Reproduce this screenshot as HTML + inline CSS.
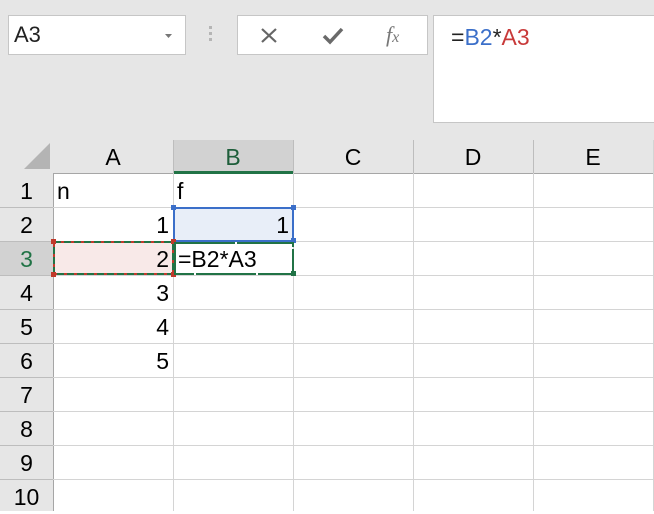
<!DOCTYPE html>
<html><head><style>
body{margin:0;width:654px;height:511px;overflow:hidden;background:#fff;font-family:"Liberation Sans",sans-serif;position:relative}
.a{position:absolute}
.t{position:absolute;font-size:23px;color:#000;line-height:34px}
</style></head><body>
<div class="a" style="left:0;top:0;width:654px;height:173px;background:#e6e6e6"></div>
<!-- name box -->
<div class="a" style="left:8px;top:15px;width:176px;height:38px;background:#fff;border:1px solid #c6c6c6"></div>
<div class="t" style="left:14px;top:18px;font-size:22px;color:#222">A3</div>
<svg class="a" style="left:165px;top:34px" width="8" height="5"><path d="M0 0H7L3.5 4Z" fill="#777"/></svg>
<div class="a" style="left:209px;top:26px;width:3px;height:3px;background:#b5b5b5;box-shadow:0 6px 0 #b5b5b5,0 12px 0 #b5b5b5"></div>
<!-- buttons -->
<div class="a" style="left:237px;top:15px;width:189px;height:38px;background:#fff;border:1px solid #c6c6c6"></div>
<svg class="a" style="left:260px;top:27px" width="18" height="17"><path d="M2 2L16 15M16 2L2 15" stroke="#666" stroke-width="2.2"/></svg>
<svg class="a" style="left:321px;top:26px" width="24" height="20"><path d="M3 10L9 16L21 3" stroke="#6a6a6a" stroke-width="3.5" fill="none"/></svg>
<div class="a" style="left:386px;top:22px;font-family:'Liberation Serif',serif;font-style:italic;font-size:22px;color:#777">f<span style="font-size:16px">x</span></div>
<!-- formula -->
<div class="a" style="left:433px;top:15px;width:225px;height:106px;background:#fff;border:1px solid #c6c6c6"></div>
<div class="t" style="left:451px;top:20px;font-size:23px;line-height:34px;color:#222">=<span style="color:#3b6fc9">B2</span>*<span style="color:#c83a3a">A3</span></div>
<!-- headers -->
<div class="a" style="left:0;top:140px;width:654px;height:33px;background:#e6e6e6;border-bottom:1px solid #a6a6a6"></div>
<div class="a" style="left:173px;top:140px;width:120px;height:31px;background:#d2d2d2;border-bottom:3px solid #217346"></div>
<svg class="a" style="left:20px;top:142px" width="32" height="30"><path d="M4 27L30 1V27Z" fill="#b4b4b4"/></svg>
<div class="a" style="left:0;top:173px;width:53px;height:338px;background:#e6e6e6;border-right:1px solid #a6a6a6"></div>
<div class="a" style="left:0;top:242px;width:53px;height:33px;background:#d2d2d2"></div>
<!-- grid lines -->
<svg class="a" style="left:0;top:140px" width="654" height="371">
<g stroke="#d4d4d4" stroke-width="1">
<path d="M173.5 0V371M293.5 0V371M413.5 0V371M533.5 0V371M653.5 0V371"/>
<path d="M53 67.5H654M53 101.5H654M53 135.5H654M53 169.5H654M53 203.5H654M53 237.5H654M53 271.5H654M53 305.5H654M53 339.5H654"/>
</g>
<g stroke="#bdbdbd"><path d="M0 67.5H53M0 101.5H53M0 135.5H53M0 169.5H53M0 203.5H53M0 237.5H53M0 271.5H53M0 305.5H53M0 339.5H53"/>
<path d="M173.5 0V33M293.5 0V33M413.5 0V33M533.5 0V33"/></g>
</svg>
<!-- header labels -->
<div class="t" style="left:53px;top:140px;width:120px;text-align:center">A</div>
<div class="t" style="left:173px;top:140px;width:120px;text-align:center;color:#1e5e3a">B</div>
<div class="t" style="left:293px;top:140px;width:120px;text-align:center">C</div>
<div class="t" style="left:413px;top:140px;width:120px;text-align:center">D</div>
<div class="t" style="left:533px;top:140px;width:120px;text-align:center">E</div>
<div class="t" style="left:0;top:174px;width:53px;text-align:center">1</div>
<div class="t" style="left:0;top:208px;width:53px;text-align:center">2</div>
<div class="t" style="left:0;top:242px;width:53px;text-align:center;color:#217346">3</div>
<div class="t" style="left:0;top:276px;width:53px;text-align:center">4</div>
<div class="t" style="left:0;top:310px;width:53px;text-align:center">5</div>
<div class="t" style="left:0;top:344px;width:53px;text-align:center">6</div>
<div class="t" style="left:0;top:378px;width:53px;text-align:center">7</div>
<div class="t" style="left:0;top:412px;width:53px;text-align:center">8</div>
<div class="t" style="left:0;top:446px;width:53px;text-align:center">9</div>
<div class="t" style="left:0;top:480px;width:53px;text-align:center">10</div>
<!-- highlights -->
<div class="a" style="left:174px;top:208px;width:119px;height:33px;background:#e8eef8"></div>
<div class="a" style="left:54px;top:242px;width:119px;height:33px;background:#f8e9e8"></div>
<svg class="a" style="left:0;top:0" width="654" height="511">
<rect x="54" y="242" width="119" height="32" fill="none" stroke="#c0392b" stroke-width="2"/>
<rect x="54" y="242" width="119" height="32" fill="none" stroke="#217346" stroke-width="2" stroke-dasharray="7 3"/>
<rect x="174" y="208" width="119" height="33" fill="none" stroke="#3b6fc9" stroke-width="2"/>
<rect x="171" y="205" width="5" height="5" fill="#3b6fc9"/><rect x="291" y="205" width="5" height="5" fill="#3b6fc9"/><rect x="291" y="238" width="5" height="5" fill="#3b6fc9"/>
<rect x="51" y="239" width="5" height="5" fill="#c0392b"/><rect x="171" y="239" width="5" height="5" fill="#c0392b"/><rect x="51" y="272" width="5" height="5" fill="#c0392b"/><rect x="171" y="272" width="5" height="5" fill="#c0392b"/>
<rect x="175" y="243" width="118" height="31" fill="none" stroke="#217346" stroke-width="2" stroke-dasharray="60 2"/>
<rect x="291" y="271" width="5" height="5" fill="#217346"/>
</svg>
<!-- cells -->
<div class="t" style="left:57px;top:174px">n</div>
<div class="t" style="left:177px;top:174px">f</div>
<div class="t" style="left:53px;top:208px;width:116px;text-align:right">1</div>
<div class="t" style="left:173px;top:208px;width:116px;text-align:right">1</div>
<div class="t" style="left:53px;top:242px;width:116px;text-align:right">2</div>
<div class="t" style="left:178px;top:242px">=B2*A3</div>
<div class="t" style="left:53px;top:276px;width:116px;text-align:right">3</div>
<div class="t" style="left:53px;top:310px;width:116px;text-align:right">4</div>
<div class="t" style="left:53px;top:344px;width:116px;text-align:right">5</div>
</body></html>
